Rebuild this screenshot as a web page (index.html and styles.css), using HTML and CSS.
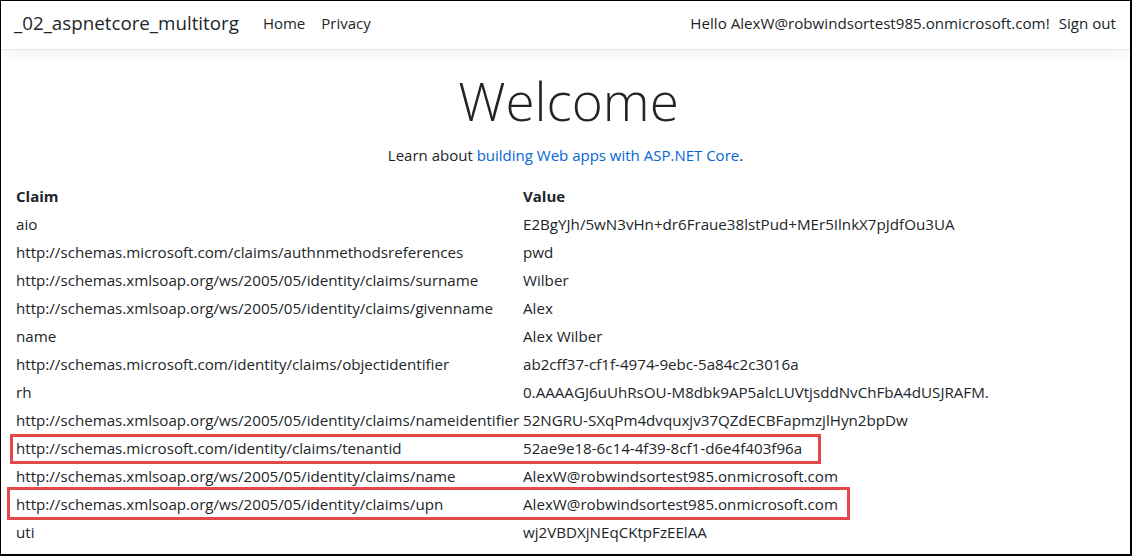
FILE: index.html
```html
<!DOCTYPE html>
<html lang="en">
<head>
<meta charset="utf-8">
<title>_02_aspnetcore_multitorg</title>
<link rel="stylesheet" href="styles.css">
</head>
<body>
<div class="frame">
  <header class="navbar">
    <div class="nav-left">
      <a class="brand" href="#">_02_aspnetcore_multitorg</a>
      <nav class="links">
        <a href="#">Home</a>
        <a href="#">Privacy</a>
      </nav>
    </div>
    <div class="nav-right">
      <span class="hello">Hello AlexW@robwindsortest985.onmicrosoft.com!</span>
      <a href="#">Sign out</a>
    </div>
  </header>
  <main class="main">
    <h1 class="welcome">Welcome</h1>
    <p class="learn">Learn about <a href="#">building Web apps with ASP.NET Core</a>.</p>
    <table class="claims">
      <colgroup>
        <col class="col-claim">
        <col class="col-value">
      </colgroup>
      <thead>
        <tr><th>Claim</th><th>Value</th></tr>
      </thead>
      <tbody>
        <tr><td>aio</td><td>E2BgYJh/5wN3vHn+dr6Fraue38lstPud+MEr5IlnkX7pJdfOu3UA</td></tr>
        <tr><td>http://schemas.microsoft.com/claims/authnmethodsreferences</td><td>pwd</td></tr>
        <tr><td>http://schemas.xmlsoap.org/ws/2005/05/identity/claims/surname</td><td>Wilber</td></tr>
        <tr><td>http://schemas.xmlsoap.org/ws/2005/05/identity/claims/givenname</td><td>Alex</td></tr>
        <tr><td>name</td><td>Alex Wilber</td></tr>
        <tr><td>http://schemas.microsoft.com/identity/claims/objectidentifier</td><td>ab2cff37-cf1f-4974-9ebc-5a84c2c3016a</td></tr>
        <tr><td>rh</td><td>0.AAAAGJ6uUhRsOU-M8dbk9AP5alcLUVtjsddNvChFbA4dUSJRAFM.</td></tr>
        <tr><td>http://schemas.xmlsoap.org/ws/2005/05/identity/claims/nameidentifier</td><td>52NGRU-SXqPm4dvquxjv37QZdECBFapmzjlHyn2bpDw</td></tr>
        <tr><td>http://schemas.microsoft.com/identity/claims/tenantid</td><td>52ae9e18-6c14-4f39-8cf1-d6e4f403f96a</td></tr>
        <tr><td>http://schemas.xmlsoap.org/ws/2005/05/identity/claims/name</td><td>AlexW@robwindsortest985.onmicrosoft.com</td></tr>
        <tr><td>http://schemas.xmlsoap.org/ws/2005/05/identity/claims/upn</td><td>AlexW@robwindsortest985.onmicrosoft.com</td></tr>
        <tr><td>uti</td><td>wj2VBDXjNEqCKtpFzEElAA</td></tr>
      </tbody>
    </table>
  </main>
  <div class="highlight hl-tenant"></div>
  <div class="highlight hl-upn"></div>
</div>
</body>
</html>
```

FILE: styles.css
```css
* { box-sizing: border-box; }

html, body {
  margin: 0;
  padding: 0;
  background: #fff;
}

body {
  font-family: "Open Sans", "Noto Sans", sans-serif;
  font-size: 15px;
  color: #212529;
}

.frame {
  position: relative;
  width: 1132px;
  height: 556px;
  border: 1px solid #000;
  border-right-width: 2px;
  border-bottom-width: 2px;
  overflow: hidden;
}

a {
  color: #0366d6;
  text-decoration: none;
}

.navbar {
  height: 49px;
  display: flex;
  align-items: center;
  justify-content: space-between;
  padding: 0 14px 5px 13px;
  border-bottom: 1px solid #e5e5e5;
  box-shadow: 0 4px 12px rgba(0, 0, 0, 0.05);
}

.nav-left {
  display: flex;
  align-items: center;
}

.brand {
  font-size: 18.75px;
  color: #212529;
  margin-right: 17px;
}

.links {
  display: flex;
}

.links a,
.nav-right a {
  color: #212529;
  padding: 0 8px;
}

.links a:first-child {
  padding-left: 7px;
}

.nav-right {
  display: flex;
  align-items: center;
  font-size: 15.15px;
}

.nav-right a {
  padding-left: 9px;
  padding-right: 0;
}

.hello {
  color: #212529;
}

.main {
  padding: 18px 0 0 15px;
}

.welcome {
  margin: 0;
  text-align: center;
  font-size: 53px;
  font-weight: 300;
  line-height: 66px;
  padding-left: 6px;
  padding-right: 15px;
}

.learn {
  margin: 9px 0 0 0;
  text-align: center;
  line-height: 24px;
  padding-right: 15px;
}

.claims {
  margin-top: 15px;
  border-collapse: collapse;
  table-layout: fixed;
  width: 1000px;
  font-size: 15.15px;
}

.col-claim {
  width: 507px;
}

.col-value {
  width: 493px;
}

.claims th,
.claims td {
  padding: 0;
  height: 28px;
  text-align: left;
  white-space: nowrap;
  vertical-align: middle;
  overflow: visible;
}

.claims th {
  font-weight: 700;
  font-size: 15px;
}

.highlight {
  position: absolute;
  border: 3px solid #e5484b;
}

.hl-tenant {
  left: 9px;
  top: 433px;
  width: 811px;
  height: 30px;
}

.hl-upn {
  left: 6px;
  top: 486px;
  width: 843px;
  height: 33px;
}
```
